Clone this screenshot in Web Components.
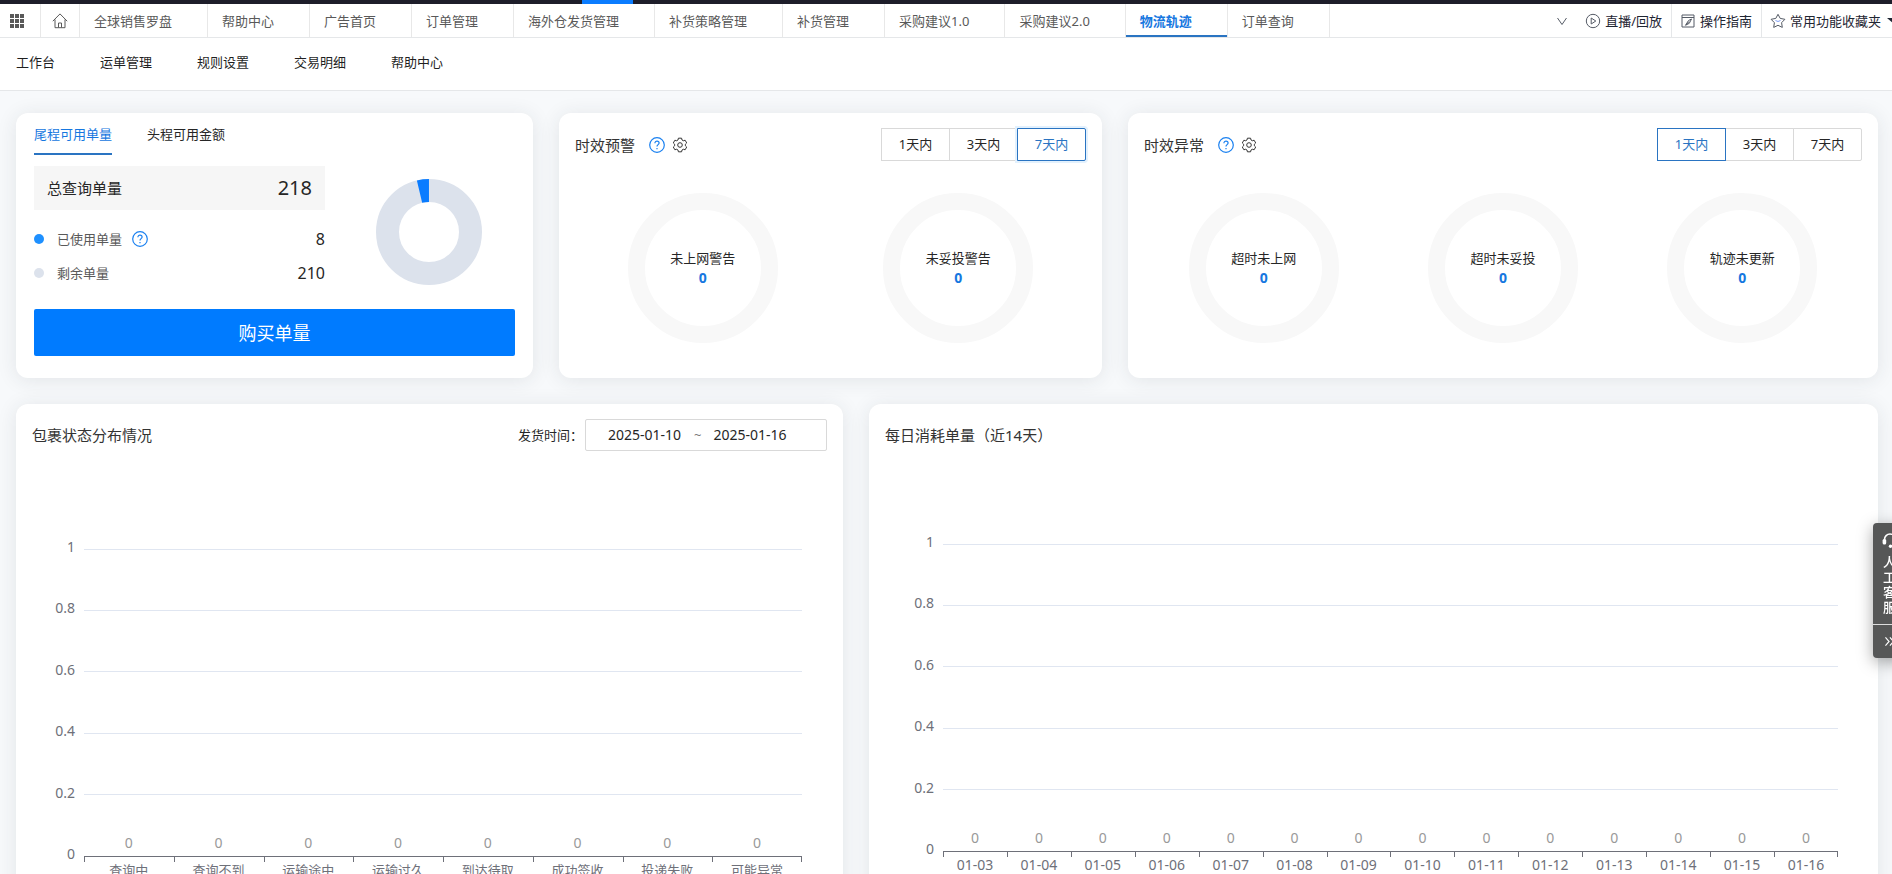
<!DOCTYPE html>
<html lang="zh-CN">
<head>
<meta charset="utf-8">
<title>物流轨迹</title>
<style>
    body {
        margin: 0;
        font-family: "Noto Sans", "Noto Sans CJK SC", sans-serif;
        font-size: 13px;
        line-height: 20px;
        color: #262626;
        background: #f7f9fb;
    }
</style>
</head>
<body>
<track-app></track-app>

<script>
const ICONS = {
    grid: '<g fill="currentColor" stroke="none"><path d="M1 1h4v4H1zM6 1h4v4H6zM11 1h4v4h-4zM1 6h4v4H1zM6 6h4v4H6zM11 6h4v4h-4zM1 11h4v4H1zM6 11h4v4H6zM11 11h4v4h-4z"/></g>',
    home: '<path d="M.8 8.2 8 .9l7.2 7.3M3 6.5v8.2h10V6.500M6.500 14.500V10h3v4.500"/>',
    down: '<path d="M3.500 5 8 11.500 12.500 5"/>',
    play: '<circle cx="8" cy="8" r="6.700"/><path d="M6.200 5v6l4.600-3z"/>',
    guide: '<path d="M2 2h12v12H2zM2 4.500h12M11.500 6 8.500 7.500l-3 4.800 3.800-2zM6 12l3-3.500"/>',
    star: '<path d="m8 1.300 2.200 4.100 4.700.9-3.300 3.400.7 4.700L8 12.300l-4.300 2.100.7-4.700L1.100 6.300l4.700-.9z"/><path stroke="#7d9cf5" d="M5.500 7.500Q8 9.500 10.500 7.500"/>',
    caret: '<path fill="currentColor" stroke="none" d="M1 5h14l-7 6z"/>',
    help: '<circle cx="8" cy="8" r="7.300" stroke-width="1.200"/><path stroke-width="1.200" d="M5.900 6.300c0-3 4.200-2.700 4.200-.2 0 1.500-2.100 1.600-2.100 3.300M8 10.900v1.300"/>',
    gear: '<path stroke-linejoin="round" d="M5.980 3 6.430 1.180H9.570L10.020 3 11.330 3.740 13.120 3.230 14.690 5.950 13.350 7.250V8.750L14.690 10.050 13.120 12.770 11.330 12.260 10.020 13 9.570 14.820H6.430L5.980 13 4.670 12.260 2.880 12.770 1.310 10.050 2.650 8.750V7.250L1.310 5.950 2.880 3.230 4.670 3.740z"/><circle cx="8" cy="8" r="2.300"/>',
    headset: '<path stroke-width="1.600" d="M2.500 9V7.500a5.500 5.500 0 0 1 11 0V9M13 11.500q-.5 2.500-4 2.800"/><g fill="currentColor" stroke="none"><rect x=".6" y="7" width="3.600" height="5.500" rx="1.600"/><rect x="11.800" y="7" width="3.600" height="5.500" rx="1.600"/><circle cx="8.500" cy="14.200" r="1.700"/></g>',
    more: '<path stroke-width="1.400" d="m3 3 4.500 5L3 13M8.500 3 13 8l-4.500 5"/>'
};

class UiIcon extends HTMLElement {
    constructor() {
        super();
        this.attachShadow({mode: 'open'});
    }

    connectedCallback() {
        this.shadowRoot.innerHTML = `<style>
            :host { display: inline-flex; flex: none; width: 16px; height: 16px; }
            svg { width: 100%; height: 100%; fill: none; stroke: currentColor; }
        </style>
        <svg viewBox="0 0 16 16" aria-hidden="true">${ICONS[this.getAttribute('name')]}</svg>`;
    }
}
customElements.define('ui-icon', UiIcon);

class NavTab extends HTMLElement {
    constructor() {
        super();
        this.attachShadow({mode: 'open'});
    }

    connectedCallback() {
        this.shadowRoot.innerHTML = `<style>
            :host { display: flex; flex: none; box-sizing: border-box; border-right: 1px solid #e8e8e8; }
            a {
                display: flex;
                align-items: center;
                padding: 0 35px 0 14px;
                color: #595959;
                text-decoration: none;
                white-space: nowrap;
            }
            :host([icon]) a { padding: 0 11px 0 11px; }
            :host([icon=start]) a { padding: 0 15px 0 9px; }
            :host([active]) a {
                color: #1677e0;
                font-weight: bold;
                box-shadow: inset 0 -2px #2a74c2;
            }
        </style>
        <a href="#"><slot></slot></a>`;
    }
}
customElements.define('nav-tab', NavTab);

class TabBar extends HTMLElement {
    constructor() {
        super();
        this.attachShadow({mode: 'open'});
    }

    connectedCallback() {
        const tabs = ['全球销售罗盘', '帮助中心', '广告首页', '订单管理', '海外仓发货管理', '补货策略管理',
            '补货管理', '采购建议1.0', '采购建议2.0', '物流轨迹', '订单查询'];
        this.shadowRoot.innerHTML = `<style>
            :host { display: block; flex: none; background: #fff; }
            .strip { height: 4px; background: #1d1d2a; }
            .strip i { display: block; width: 51px; height: 4px; margin-left: 582px; background: #0a7cff; }
            .row { display: flex; height: 33px; overflow: hidden; border-bottom: 1px solid #e5e7e9; }
            .tabs, .tools { display: flex; flex: none; }
            .tabs ui-icon { color: #595959; }
            .tools { margin-left: auto; color: #1f2633; }
            .tools a {
                display: flex;
                align-items: center;
                gap: 4px;
                padding: 0 9px 0 8px;
                border-left: 1px solid #e5e7e9;
                color: inherit;
                text-decoration: none;
                white-space: nowrap;
            }
            .tools a:first-of-type { border: 0; }
            .tools ui-icon { color: #555b66; }
            .tools .caret { margin-left: 1px; color: #1f2633; }
            .tools a:last-child { margin-right: -19px; }
            button { display: flex; align-items: center; padding: 0 7px; border: 0; background: none; color: #555; }
        </style>
        <div class="strip"><i></i></div>
        <div class="row">
            <nav class="tabs">
                <nav-tab icon="start"><ui-icon name="grid"></ui-icon></nav-tab>
                <nav-tab icon="home"><ui-icon name="home"></ui-icon></nav-tab>
                ${tabs.map(t => `<nav-tab ${t === '物流轨迹' ? 'active' : ''}>${t}</nav-tab>`).join('')}
            </nav>
            <div class="tools">
                <button type="button" aria-label="更多"><ui-icon name="down"></ui-icon></button>
                <a href="#"><ui-icon name="play"></ui-icon>直播/回放</a>
                <a href="#"><ui-icon name="guide"></ui-icon>操作指南</a>
                <a href="#"><ui-icon name="star"></ui-icon>常用功能收藏夹<ui-icon class="caret" name="caret"></ui-icon></a>
            </div>
        </div>`;
    }
}
customElements.define('tab-bar', TabBar);

class SubNav extends HTMLElement {
    constructor() {
        super();
        this.attachShadow({mode: 'open'});
    }

    connectedCallback() {
        const links = ['工作台', '运单管理', '规则设置', '交易明细', '帮助中心'];
        this.shadowRoot.innerHTML = `<style>
            :host { display: block; flex: none; background: #fff; border-bottom: 1px solid #e5e7e9; }
            nav { display: flex; gap: 45px; padding: 14px 16px 18px; }
            a { color: #1f1f1f; text-decoration: none; }
        </style>
        <nav>${links.map(l => `<a href="#">${l}</a>`).join('')}</nav>`;
    }
}
customElements.define('sub-nav', SubNav);

// White rounded box, with an optional header: title on the left, "extra" slot on the right
class PanelCard extends HTMLElement {
    constructor() {
        super();
        this.attachShadow({mode: 'open'});
    }

    connectedCallback() {
        const title = this.getAttribute('heading');
        const tools = this.hasAttribute('tools') ? `
            <button type="button" class="help" aria-label="说明"><ui-icon name="help"></ui-icon></button>
            <button type="button" aria-label="设置"><ui-icon name="gear"></ui-icon></button>` : '';
        this.shadowRoot.innerHTML = `<style>
            :host {
                display: block;
                box-sizing: border-box;
                min-width: 0;
                padding: 15px 16px 33px;
                border-radius: 12px;
                background: #fff;
                box-shadow: 0 2px 20px rgba(40, 50, 60, .1);
            }
            header { display: flex; align-items: center; height: 33px; }
            h2 { margin: 0 14px 0 0; font-size: 15px; font-weight: normal; color: #333; }
            button { display: flex; padding: 0; border: 0; margin-right: 7px; background: none; color: #333; }
            .help { color: #1a80f0; }
            .extra { margin-left: auto; }
        </style>
        ${title ? `<header><h2>${title}</h2>${tools}<div class="extra"><slot name="extra"></slot></div></header>` : ''}
        <slot></slot>`;
    }
}
customElements.define('panel-card', PanelCard);

class DaySwitch extends HTMLElement {
    constructor() {
        super();
        this.attachShadow({mode: 'open'});
    }

    connectedCallback() {
        this.render();
    }

    render() {
        const value = this.getAttribute('value');
        this.shadowRoot.innerHTML = `<style>
            :host { display: flex; }
            button {
                box-sizing: border-box;
                width: 69px;
                height: 33px;
                padding: 0 0 2px;
                border: 1px solid #d9d9d9;
                background: #fff;
                color: #262626;
                font: inherit;
            }
            button + button { margin-left: -1px; }
            button:first-child { border-radius: 2px 0 0 2px; }
            button:last-child { border-radius: 0 2px 2px 0; }
            .on { position: relative; border-color: #2a74c2; color: #2a74c2; }
            :host([focused]) .on { box-shadow: 0 0 0 2px #e3f1fd; }
        </style>
        ${['1', '3', '7'].map(d => `<button type="button" data-day="${d}" class="${d === value ? 'on' : ''}">${d}天内</button>`).join('')}`;
        this.shadowRoot.querySelectorAll('button').forEach(b => b.addEventListener('click', this.pick.bind(this)));
    }

    pick(e) {
        this.setAttribute('value', e.currentTarget.dataset.day);
        this.render();
    }
}
customElements.define('day-switch', DaySwitch);

class RingStat extends HTMLElement {
    constructor() {
        super();
        this.attachShadow({mode: 'open'});
    }

    connectedCallback() {
        this.shadowRoot.innerHTML = `<style>
            :host { display: flex; flex: 1; justify-content: center; }
            div {
                display: flex;
                flex-direction: column;
                align-items: center;
                justify-content: center;
                box-sizing: border-box;
                width: 150px;
                height: 150px;
                border: 17px solid #f8f8f8;
                border-radius: 50%;
                line-height: 19px;
                white-space: nowrap;
            }
            b { font-size: 14px; color: #1677e0; }
        </style>
        <div><span><slot></slot></span><b>${this.getAttribute('value')}</b></div>`;
    }
}
customElements.define('ring-stat', RingStat);

class QuotaPanel extends HTMLElement {
    constructor() {
        super();
        this.attachShadow({mode: 'open'});
    }

    connectedCallback() {
        this.render();
    }

    // Ring with the used share drawn backwards from 12 o'clock
    donut(used, total) {
        const length = 2 * Math.PI * 41.5;
        const part = length * used / total;
        return `<svg viewBox="0 0 106 106" role="img" aria-label="单量占比">
            <g fill="none" stroke-width="23">
                <circle cx="53" cy="53" r="41.5" stroke="#dce2ec"/>
                <circle cx="53" cy="53" r="41.5" stroke="#0a7cff" stroke-dasharray="${part} ${length}" transform="rotate(${-90 - 360 * used / total} 53 53)"/>
            </g>
        </svg>`;
    }

    render() {
        this.shadowRoot.innerHTML = `<style>
            :host { display: block; padding: 0 2px; }
            .tabs { display: flex; gap: 35px; margin-bottom: 11px; }
            .tabs button {
                padding: 0 0 9px;
                border: 0;
                border-bottom: 2px solid transparent;
                margin-top: -4px;
                background: none;
                color: #262626;
                font: inherit;
            }
            .tabs .on { color: #1677e0; border-color: #2a74c2; }
            .body { display: grid; grid-template-columns: 291fr 190fr; align-items: center; }
            .chart { display: flex; justify-content: center; padding: 8px 0 0 18px; }
            svg { width: 106px; height: 106px; }
            .total, .line { display: flex; align-items: center; justify-content: space-between; }
            .total { height: 44px; padding: 0 13px; margin-bottom: 12px; background: #f6f6f6; font-size: 15px; }
            .total strong { font-size: 20px; font-weight: normal; }
            .line { height: 34px; }
            .line span { display: flex; align-items: center; color: #595959; }
            .line i { width: 10px; height: 10px; border-radius: 50%; margin-right: 13px; background: #dce2ec; }
            .line .used { background: #1e90ff; }
            .line em { font-size: 16px; font-style: normal; }
            .help { display: flex; padding: 0; border: 0; margin-left: 10px; background: none; color: #1a80f0; }
            .buy {
                width: 100%;
                height: 47px;
                border: 0;
                border-radius: 2px;
                margin: 19px 0 -12px;
                background: #007bff;
                color: #fff;
                font: inherit;
                font-size: 18px;
            }
        </style>
        <div class="tabs">
            <button type="button" class="on">尾程可用单量</button>
            <button type="button">头程可用金额</button>
        </div>
        <div class="body">
            <div class="figures">
                <div class="total">总查询单量<strong>218</strong></div>
                <div class="line">
                    <span><i class="used"></i>已使用单量<button type="button" class="help" aria-label="说明"><ui-icon name="help"></ui-icon></button></span>
                    <em>8</em>
                </div>
                <div class="line"><span><i></i>剩余单量</span><em>210</em></div>
            </div>
            <div class="chart">${this.donut(8, 218)}</div>
        </div>
        <button type="button" class="buy">购买单量</button>`;
    }
}
customElements.define('quota-panel', QuotaPanel);

class DateRange extends HTMLElement {
    constructor() {
        super();
        this.attachShadow({mode: 'open'});
    }

    connectedCallback() {
        this.shadowRoot.innerHTML = `<style>
            :host { display: flex; align-items: center; }
            label { margin-right: 2px; white-space: nowrap; }
            .box {
                display: flex;
                align-items: center;
                gap: 12px;
                box-sizing: border-box;
                width: 242px;
                height: 32px;
                padding: 0 22px;
                border: 1px solid #d9d9d9;
                border-radius: 2px;
                color: #777;
            }
            input {
                width: 74px;
                padding: 0;
                border: 0;
                outline: 0;
                background: none;
                color: #262626;
                font: inherit;
                font-size: 14px;
            }
        </style>
        <label for="from">发货时间：</label>
        <div class="box">
            <input id="from" type="text" value="${this.getAttribute('from')}"><span>~</span><input type="text" aria-label="结束时间" value="${this.getAttribute('to')}">
        </div>`;
    }
}
customElements.define('date-range', DateRange);

class AxisChart extends HTMLElement {
    constructor() {
        super();
        this.attachShadow({mode: 'open'});
    }

    connectedCallback() {
        const labels = this.getAttribute('labels').split(',');
        const scale = ['1', '0.8', '0.6', '0.4', '0.2'];
        this.shadowRoot.innerHTML = `<style>
            :host {
                display: grid;
                grid-template-columns: var(--axis-width, 52px) 1fr;
                grid-template-rows: 308px auto;
                font-size: 14px;
                color: #6e7079;
            }
            .scale { display: grid; grid-template-rows: repeat(5, 1fr) 0; text-align: right; padding-right: 9px; }
            .scale span { margin-top: -12px; }
            .lines, .values { grid-area: 1 / 2; display: grid; }
            .lines { grid-template-rows: repeat(5, 1fr); border-bottom: 1px solid #6e7079; }
            .lines i { border-top: 1px solid #e0e6f1; }
            .values { grid-auto-flow: column; grid-auto-columns: 1fr; align-items: end; text-align: center; color: #999; }
            .values span { margin-bottom: 4px; }
            .names { grid-area: 2 / 2; display: grid; grid-auto-flow: column; grid-auto-columns: 1fr; text-align: center; }
            .names span {
                padding-top: 3px;
                white-space: nowrap;
                font-size: var(--name-size, 14px);
                background: linear-gradient(#6e7079, #6e7079) 0 0 / 1px 5px no-repeat;
            }
            .names span:last-child {
                background: linear-gradient(#6e7079, #6e7079) 0 0 / 1px 5px no-repeat, linear-gradient(#6e7079, #6e7079) 100% 0 / 1px 5px no-repeat;
            }
        </style>
        <div class="scale">${scale.map(s => `<span>${s}</span>`).join('')}<span>0</span></div>
        <div class="lines">${scale.map(() => '<i></i>').join('')}</div>
        <div class="values">${labels.map(() => '<span>0</span>').join('')}</div>
        <div class="names">${labels.map(l => `<span>${l}</span>`).join('')}</div>`;
    }
}
customElements.define('axis-chart', AxisChart);

class ServiceFloat extends HTMLElement {
    constructor() {
        super();
        this.attachShadow({mode: 'open'});
    }

    connectedCallback() {
        this.shadowRoot.innerHTML = `<style>
            :host {
                position: fixed;
                top: 523px;
                right: -14px;
                width: 33px;
                border-radius: 4px;
                background: #565757;
                box-shadow: 0 4px 16px rgba(0, 0, 0, .35);
                color: #fff;
            }
            button {
                display: flex;
                flex-direction: column;
                align-items: center;
                width: 100%;
                padding: 9px 8px;
                border: 0;
                background: none;
                color: inherit;
                font: inherit;
                font-weight: 500;
                line-height: 15px;
            }
            ui-icon { margin-bottom: 7px; }
            .fold { padding: 10px 8px; border-top: 1px solid #ddd; }
            .fold ui-icon { width: 13px; height: 13px; margin: 0; }
        </style>
        <button type="button"><ui-icon name="headset"></ui-icon><span>人<br>工<br>客<br>服</span></button>
        <button type="button" class="fold" aria-label="收起"><ui-icon name="more"></ui-icon></button>`;
    }
}
customElements.define('service-float', ServiceFloat);

class TrackApp extends HTMLElement {
    constructor() {
        super();
        this.attachShadow({mode: 'open'});
    }

    connectedCallback() {
        this.shadowRoot.innerHTML = `<style>
            :host { display: flex; flex-direction: column; height: 100vh; overflow: hidden; }
            main {
                display: flex;
                flex-direction: column;
                gap: 26px;
                flex: 1;
                min-height: 0;
                padding: 22px 14px 26px 16px;
                overflow: auto;
                scrollbar-width: none;
            }
            .row { display: grid; gap: 26px; }
            .top { grid-template-columns: 517fr 543fr 750fr; }
            .bottom { grid-template-columns: 827fr 1009fr; }
            .rings { display: flex; margin-top: 32px; }
            .status { margin: 97px 25px 0 0; --axis-width: 52px; --name-size: 13px; }
            .daily { margin: 92px 24px 0 0; --axis-width: 58px; }
        </style>
        <tab-bar></tab-bar>
        <sub-nav></sub-nav>
        <main>
            <div class="row top">
                <panel-card><quota-panel></quota-panel></panel-card>
                <panel-card heading="时效预警" tools>
                    <day-switch slot="extra" value="7" focused></day-switch>
                    <div class="rings">
                        <ring-stat value="0">未上网警告</ring-stat>
                        <ring-stat value="0">未妥投警告</ring-stat>
                    </div>
                </panel-card>
                <panel-card heading="时效异常" tools>
                    <day-switch slot="extra" value="1"></day-switch>
                    <div class="rings">
                        <ring-stat value="0">超时未上网</ring-stat>
                        <ring-stat value="0">超时未妥投</ring-stat>
                        <ring-stat value="0">轨迹未更新</ring-stat>
                    </div>
                </panel-card>
            </div>
            <div class="row bottom">
                <panel-card heading="包裹状态分布情况">
                    <date-range slot="extra" from="2025-01-10" to="2025-01-16"></date-range>
                    <axis-chart class="status" labels="查询中,查询不到,运输途中,运输过久,到达待取,成功签收,投递失败,可能异常"></axis-chart>
                </panel-card>
                <panel-card heading="每日消耗单量（近14天）">
                    <axis-chart class="daily" labels="01-03,01-04,01-05,01-06,01-07,01-08,01-09,01-10,01-11,01-12,01-13,01-14,01-15,01-16"></axis-chart>
                </panel-card>
            </div>
        </main>
        <service-float></service-float>`;
    }
}
customElements.define('track-app', TrackApp);
</script>
</body>
</html>
